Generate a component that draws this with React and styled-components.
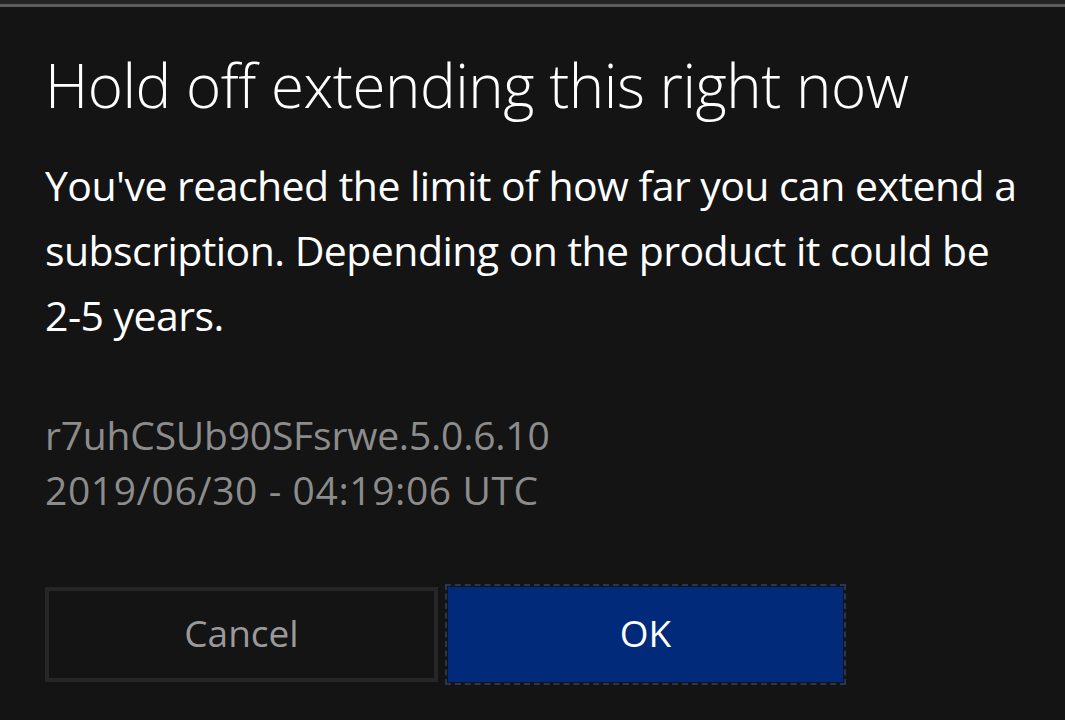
import React from "react";
import styled, { createGlobalStyle } from "styled-components";

const Global = createGlobalStyle`
  html, body { margin: 0; padding: 0; background: #141414; }
  body { width: 1065px; height: 720px; overflow: hidden; }
`;

const Page = styled.div`
  width: 1065px;
  height: 720px;
  background: #141414;
  display: flex;
  flex-direction: column;
  font-family: "Open Sans", "Noto Sans", sans-serif;
`;

const TopBand = styled.div`
  height: 4px;
  background: #232323;
`;

const TopRule = styled.div`
  height: 3px;
  background: #5c5c5c;
`;

const Dialog = styled.div`
  display: flex;
  flex-direction: column;
  padding: 38px 45px 0 45px;
`;

const Title = styled.h1`
  margin: 0;
  font-size: 60px;
  font-weight: 300;
  line-height: 80px;
  color: #ffffff;
  letter-spacing: -0.45px;
  white-space: nowrap;
`;

const Body = styled.p`
  margin: 28px 0 0 0;
  font-size: 41px;
  font-weight: 400;
  line-height: 65px;
  color: #ffffff;
  letter-spacing: -0.55px;
  width: 990px;
`;

const NoBreak = styled.span`
  white-space: nowrap;
`;

const Meta = styled.div`
  margin-top: 59px;
  display: flex;
  flex-direction: column;
`;

const MetaLine = styled.div`
  font-size: 39px;
  line-height: 55px;
  color: #8c8c8c;
  letter-spacing: ${(p) => p.$ls}px;
  white-space: nowrap;
`;

const Buttons = styled.div`
  display: flex;
  gap: 10px;
  margin-top: 70px;
`;

const Button = styled.button`
  box-sizing: border-box;
  height: 95px;
  width: ${(p) => p.$w}px;
  font-family: "Open Sans", "Noto Sans", sans-serif;
  font-size: 37px;
  display: flex;
  align-items: center;
  justify-content: center;
  padding: 0 0 4px 0;
  cursor: pointer;
  background: ${(p) => (p.$primary ? "#022a7a" : "#141414")};
  color: ${(p) => (p.$primary ? "#ffffff" : "#9a9a9a")};
  border: ${(p) => (p.$primary ? "none" : "4px solid #262626")};
  outline: ${(p) => (p.$primary ? "2px dashed #2a3550" : "none")};
  outline-offset: 1px;
`;

export default function App() {
  return (
    <Page>
      <Global />
      <TopBand />
      <TopRule />
      <Dialog>
        <Title>Hold off extending this right now</Title>
        <Body>
          You've reached the limit of how far you can extend a subscription.
          Depending on the product it could be <NoBreak>2-5 years.</NoBreak>
        </Body>
        <Meta>
          <MetaLine $ls={-0.2}>r7uhCSUb90SFsrwe.5.0.6.10</MetaLine>
          <MetaLine $ls={0.6}>2019/06/30 - 04:19:06 UTC</MetaLine>
        </Meta>
        <Buttons>
          <Button $w={393}>Cancel</Button>
          <Button $primary $w={395}>OK</Button>
        </Buttons>
      </Dialog>
    </Page>
  );
}
